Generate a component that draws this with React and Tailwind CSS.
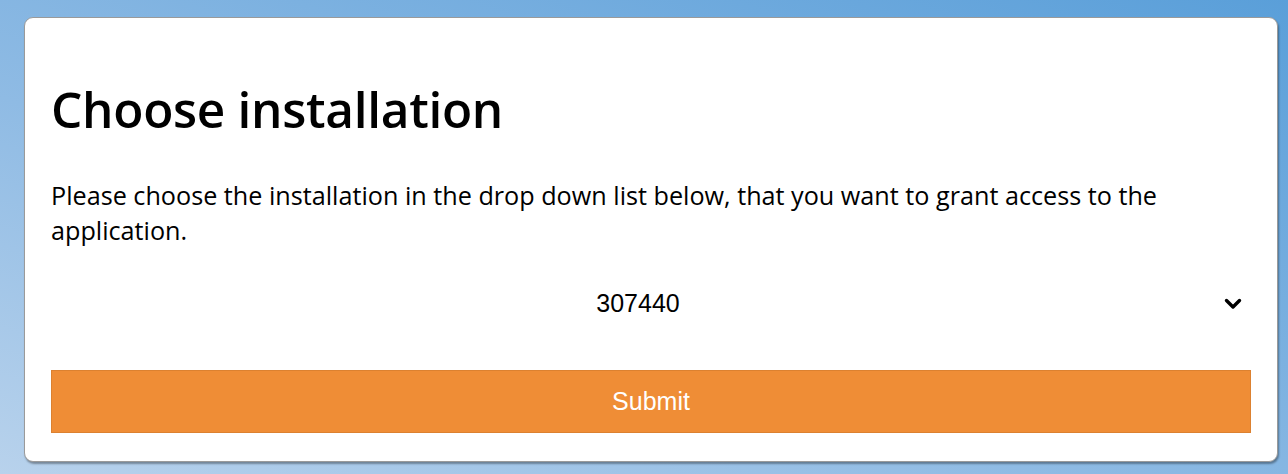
export default function App() {
  return (
    <div className="w-[1288px] h-[474px] overflow-hidden bg-[linear-gradient(20deg,#b8d2ec_0%,#8fbbe4_40%,#5a9fd9_100%)] pt-[17px] pl-[24px]">
      <div className="w-[1254px] h-[445px] bg-white rounded-[9px] border border-[#9a9a9a] shadow-[1px_2px_2px_rgba(0,0,0,0.35)] px-[26px] pt-[63px] flex flex-col">
        <h1 className="text-[49.5px] leading-[56px] font-semibold text-black tracking-[-0.3px] font-['Open_Sans',sans-serif]">
          Choose installation
        </h1>
        <p className="mt-[41px] text-[25.2px] leading-[35px] text-black w-[1200px] font-['Open_Sans',sans-serif]">
          Please choose the installation in the drop down list below, that you want to grant access to the application.
        </p>
        <div className="relative mt-[31px] h-[50px] w-[1200px] flex items-center justify-center pr-[26px]">
          <span className="text-[25px] text-black font-['Liberation_Sans',Arial,sans-serif]">307440</span>
          <svg className="absolute right-[9px] top-1/2 -translate-y-1/2" width="18" height="12" viewBox="0 0 18 12">
            <path d="M2.5 2.5 L9 9 L15.5 2.5" fill="none" stroke="black" strokeWidth="3.4" strokeLinecap="round" strokeLinejoin="round" />
          </svg>
        </div>
        <button className="mt-[41px] w-[1200px] h-[63px] bg-[#ef8d36] border border-[#dc8130] text-white text-[25px] flex items-center justify-center font-['Liberation_Sans',Arial,sans-serif]">
          Submit
        </button>
      </div>
    </div>
  );
}
